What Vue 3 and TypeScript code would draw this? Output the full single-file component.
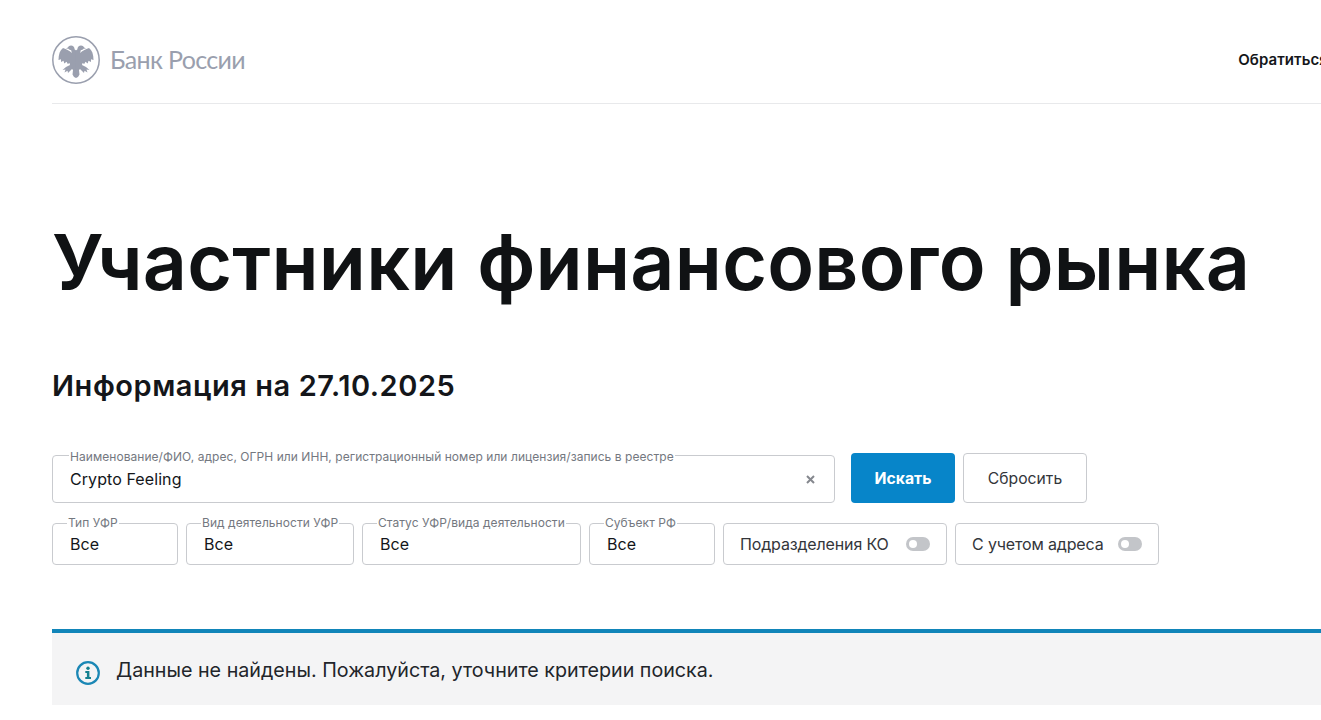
<template>
  <div class="page">
    <header class="top">
      <div class="logo">
        <svg class="emblem" width="48" height="48" viewBox="0 0 48 48">
          <circle cx="24" cy="24" r="23.2" fill="none" stroke="#9a9fae" stroke-width="1.5" />
          <path fill="#9a9fae" :d="eagle" />
          <path fill="#9a9fae" :d="eagle" transform="matrix(-1 0 0 1 48 0)" />
        </svg>
        <span class="logo-text">Банк России</span>
      </div>
      <span class="contact">Обратиться в Банк России</span>
    </header>

    <h1 class="title">Участники финансового рынка</h1>
    <h2 class="subtitle">Информация на 27.10.2025</h2>

    <div class="search-row">
      <fieldset class="field field-main">
        <legend>Наименование/ФИО, адрес, ОГРН или ИНН, регистрационный номер или лицензия/запись в реестре</legend>
        <span class="value">{{ query }}</span>
        <svg class="clear" width="9" height="9" viewBox="0 0 9 9">
          <path d="M1 1l7 7M8 1l-7 7" stroke="#85888e" stroke-width="2" fill="none" />
        </svg>
      </fieldset>
      <button class="btn btn-primary">Искать</button>
      <button class="btn btn-reset">Сбросить</button>
    </div>

    <div class="filter-row">
      <fieldset v-for="f in filters" :key="f.label" class="field field-small" :class="f.cls">
        <legend>{{ f.label }}</legend>
        <span class="value">Все</span>
      </fieldset>
      <div v-for="t in toggles" :key="t.label" class="toggle-box" :class="t.cls">
        <span>{{ t.label }}</span>
        <span class="switch"></span>
      </div>
    </div>

    <div class="notice">
      <svg class="notice-icon" width="26" height="26" viewBox="0 0 26 26">
        <circle cx="13" cy="13" r="10.8" fill="none" stroke="#1b87b5" stroke-width="2.2" />
        <circle cx="13" cy="8.2" r="1.7" fill="#14808f" />
        <path d="M10.300 11h4.100v6h1.600v2h-5.700v-2h1.600v-4h-1.600z" fill="#14808f" />
      </svg>
      <span class="notice-text">Данные не найдены. Пожалуйста, уточните критерии поиска.</span>
    </div>
  </div>
</template>

<script setup lang="ts">
const query = 'Crypto Feeling'

// left half of the eagle, the right half is the same path mirrored
const eagle =
  'M24.2 14.500L22.700 13.500C22.500 11 21 9.500 19 9.500C17.500 9.500 16.500 10.200 15.800 11.500L14 12.500L16.500 12.700C17.200 13.700 18 14 19.200 14.200L19.800 17C18 14.500 14.500 13.500 11 12C8 14 6.500 18 6.500 24L9 23.200L9 26L11.500 24.800L12.300 27.500L14.500 25.800L15.800 28L17.500 27L18 29L14 31L10.500 34L13.500 33.500L12.500 36.500L15.500 34.800L16 37L20 33L21 34L20.500 38.500L22 41L24.200 42Z'

const filters = [
  { label: 'Тип УФР', cls: 'f-type' },
  { label: 'Вид деятельности УФР', cls: 'f-kind' },
  { label: 'Статус УФР/вида деятельности', cls: 'f-status' },
  { label: 'Субъект РФ', cls: 'f-region' },
]

const toggles = [
  { label: 'Подразделения КО', cls: 't-branch' },
  { label: 'С учетом адреса', cls: 't-address' },
]
</script>

<style>
html,
body {
  margin: 0;
  background: #fff;
  overflow: hidden;
}
</style>

<style scoped>
.page {
  width: 1321px;
  height: 720px;
  overflow: hidden;
  padding-left: 52px;
  box-sizing: border-box;
  font-family: Inter, "Noto Sans", sans-serif;
  color: #14161a;
}
.top {
  width: 1269px;
  height: 87px;
  padding-top: 16px;
  border-bottom: 1px solid #e8e9eb;
  display: flex;
  align-items: center;
  justify-content: space-between;
  overflow: hidden;
  white-space: nowrap;
}
.logo {
  display: flex;
  align-items: center;
  gap: 10px;
}
.emblem {
  display: block;
}
.logo-text {
  font-family: Lato, "Open Sans", sans-serif;
  font-size: 25px;
  letter-spacing: -0.65px;
  color: #9a9fae;
  margin-bottom: 2px;
}
.contact {
  font-size: 15px;
  font-weight: 600;
  letter-spacing: 0.05px;
  margin-right: -118px;
  flex-shrink: 0;
}
.title {
  margin: 116px 0 0;
  font-size: 77px;
  line-height: 84px;
  font-weight: 600;
  letter-spacing: 0.22px;
  color: #101214;
  white-space: nowrap;
}
.subtitle {
  margin: 64px 0 0;
  font-size: 29px;
  line-height: 36px;
  font-weight: 600;
  letter-spacing: 0.55px;
}
.search-row {
  display: flex;
  align-items: flex-end;
  margin-top: 45px;
  gap: 8px;
}
.field {
  margin: 0;
  padding: 0 0 0 17px;
  border: 1px solid #c9cbcf;
  border-radius: 4px;
  position: relative;
  box-sizing: border-box;
  min-width: 0;
  display: flex;
  align-items: center;
}
.field legend {
  font-size: 12px;
  line-height: 12px;
  letter-spacing: 0.05px;
  color: #74787f;
  padding: 0 1px;
  margin-left: -1px;
  white-space: nowrap;
}
.value {
  font-size: 16px;
  letter-spacing: 0.08px;
  color: #14161a;
}
.field-main {
  width: 783px;
  height: 54px;
  margin-right: 8px;
  padding-bottom: 6px;
}
.field-main legend {
  position: relative;
  top: 2px;
}
.clear {
  position: absolute;
  right: 19px;
  top: 14px;
}
.btn {
  height: 50px;
  border-radius: 4px;
  font-family: inherit;
  font-size: 15.7px;
  cursor: pointer;
  padding: 0;
}
.btn-primary {
  width: 104px;
  background: #0785c9;
  border: none;
  color: #fff;
  font-weight: 700;
}
.btn-reset {
  width: 124px;
  background: #fff;
  border: 1px solid #c9cbcf;
  color: #33363b;
}
.filter-row {
  display: flex;
  gap: 8px;
  margin-top: 14px;
  align-items: flex-end;
}
.field-small {
  height: 48px;
  padding-bottom: 6px;
}
.field-small legend {
  margin-left: -3px;
}
.f-type {
  width: 126px;
}
.f-kind {
  width: 168px;
}
.f-status {
  width: 219px;
}
.f-region {
  width: 126px;
}
.toggle-box {
  height: 42px;
  box-sizing: border-box;
  border: 1px solid #c9cbcf;
  border-radius: 4px;
  display: flex;
  align-items: center;
  justify-content: space-between;
  padding: 0 16px;
  font-size: 16px;
  letter-spacing: -0.15px;
  color: #33363b;
  white-space: nowrap;
}
.t-branch {
  width: 224px;
}
.t-address {
  width: 204px;
}
.switch {
  width: 24px;
  height: 14px;
  border-radius: 7px;
  background: #c3c5c9;
  position: relative;
}
.switch::before {
  content: "";
  position: absolute;
  left: 3px;
  top: 3px;
  width: 8px;
  height: 8px;
  border-radius: 50%;
  background: #fff;
}
.notice {
  margin-top: 64px;
  width: 1269px;
  height: 76px;
  box-sizing: border-box;
  border-top: 4px solid #1185b9;
  background: #f4f4f5;
  display: flex;
  align-items: center;
  gap: 15px;
  padding-left: 23px;
  font-size: 19.7px;
  color: #22252a;
}
.notice-icon {
  margin-top: 8px;
}
.notice-text {
  margin-top: 2px;
}
</style>
